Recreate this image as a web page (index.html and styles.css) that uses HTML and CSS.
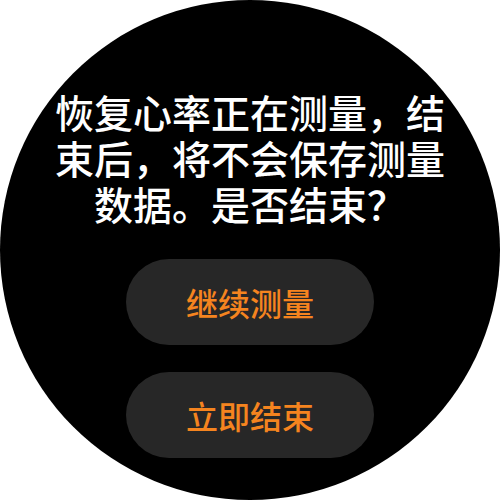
FILE: index.html
```html
<!DOCTYPE html>
<html lang="zh-CN">
<head>
<meta charset="utf-8">
<link rel="stylesheet" href="styles.css">
</head>
<body>
<div class="watch">
  <p class="message">恢复心率正在测量，结束后，将不会保存测量数据。是否结束？</p>
  <div class="actions">
    <button class="btn">继续测量</button>
    <button class="btn">立即结束</button>
  </div>
</div>
</body>
</html>
```
FILE: styles.css
```css
html, body {
  margin: 0;
  padding: 0;
  background: #ffffff;
}
.watch {
  width: 500px;
  height: 500px;
  border-radius: 50%;
  background: #000000;
  display: flex;
  flex-direction: column;
  align-items: center;
  box-sizing: border-box;
  padding-top: 88px;
  font-family: "Noto Sans CJK SC", "Noto Sans", sans-serif;
}
.message {
  margin: 0;
  width: 400px;
  color: #ffffff;
  font-size: 39px;
  font-weight: 500;
  line-height: 46px;
  text-align: center;
}
.actions {
  margin-top: 33px;
  display: flex;
  flex-direction: column;
  gap: 27px;
}
.btn {
  width: 248px;
  height: 86px;
  border: none;
  border-radius: 43px;
  background: #272727;
  color: #f5841f;
  font-family: "Noto Sans CJK SC", "Noto Sans", sans-serif;
  font-size: 32px;
  font-weight: 500;
  padding: 0;
}
```
